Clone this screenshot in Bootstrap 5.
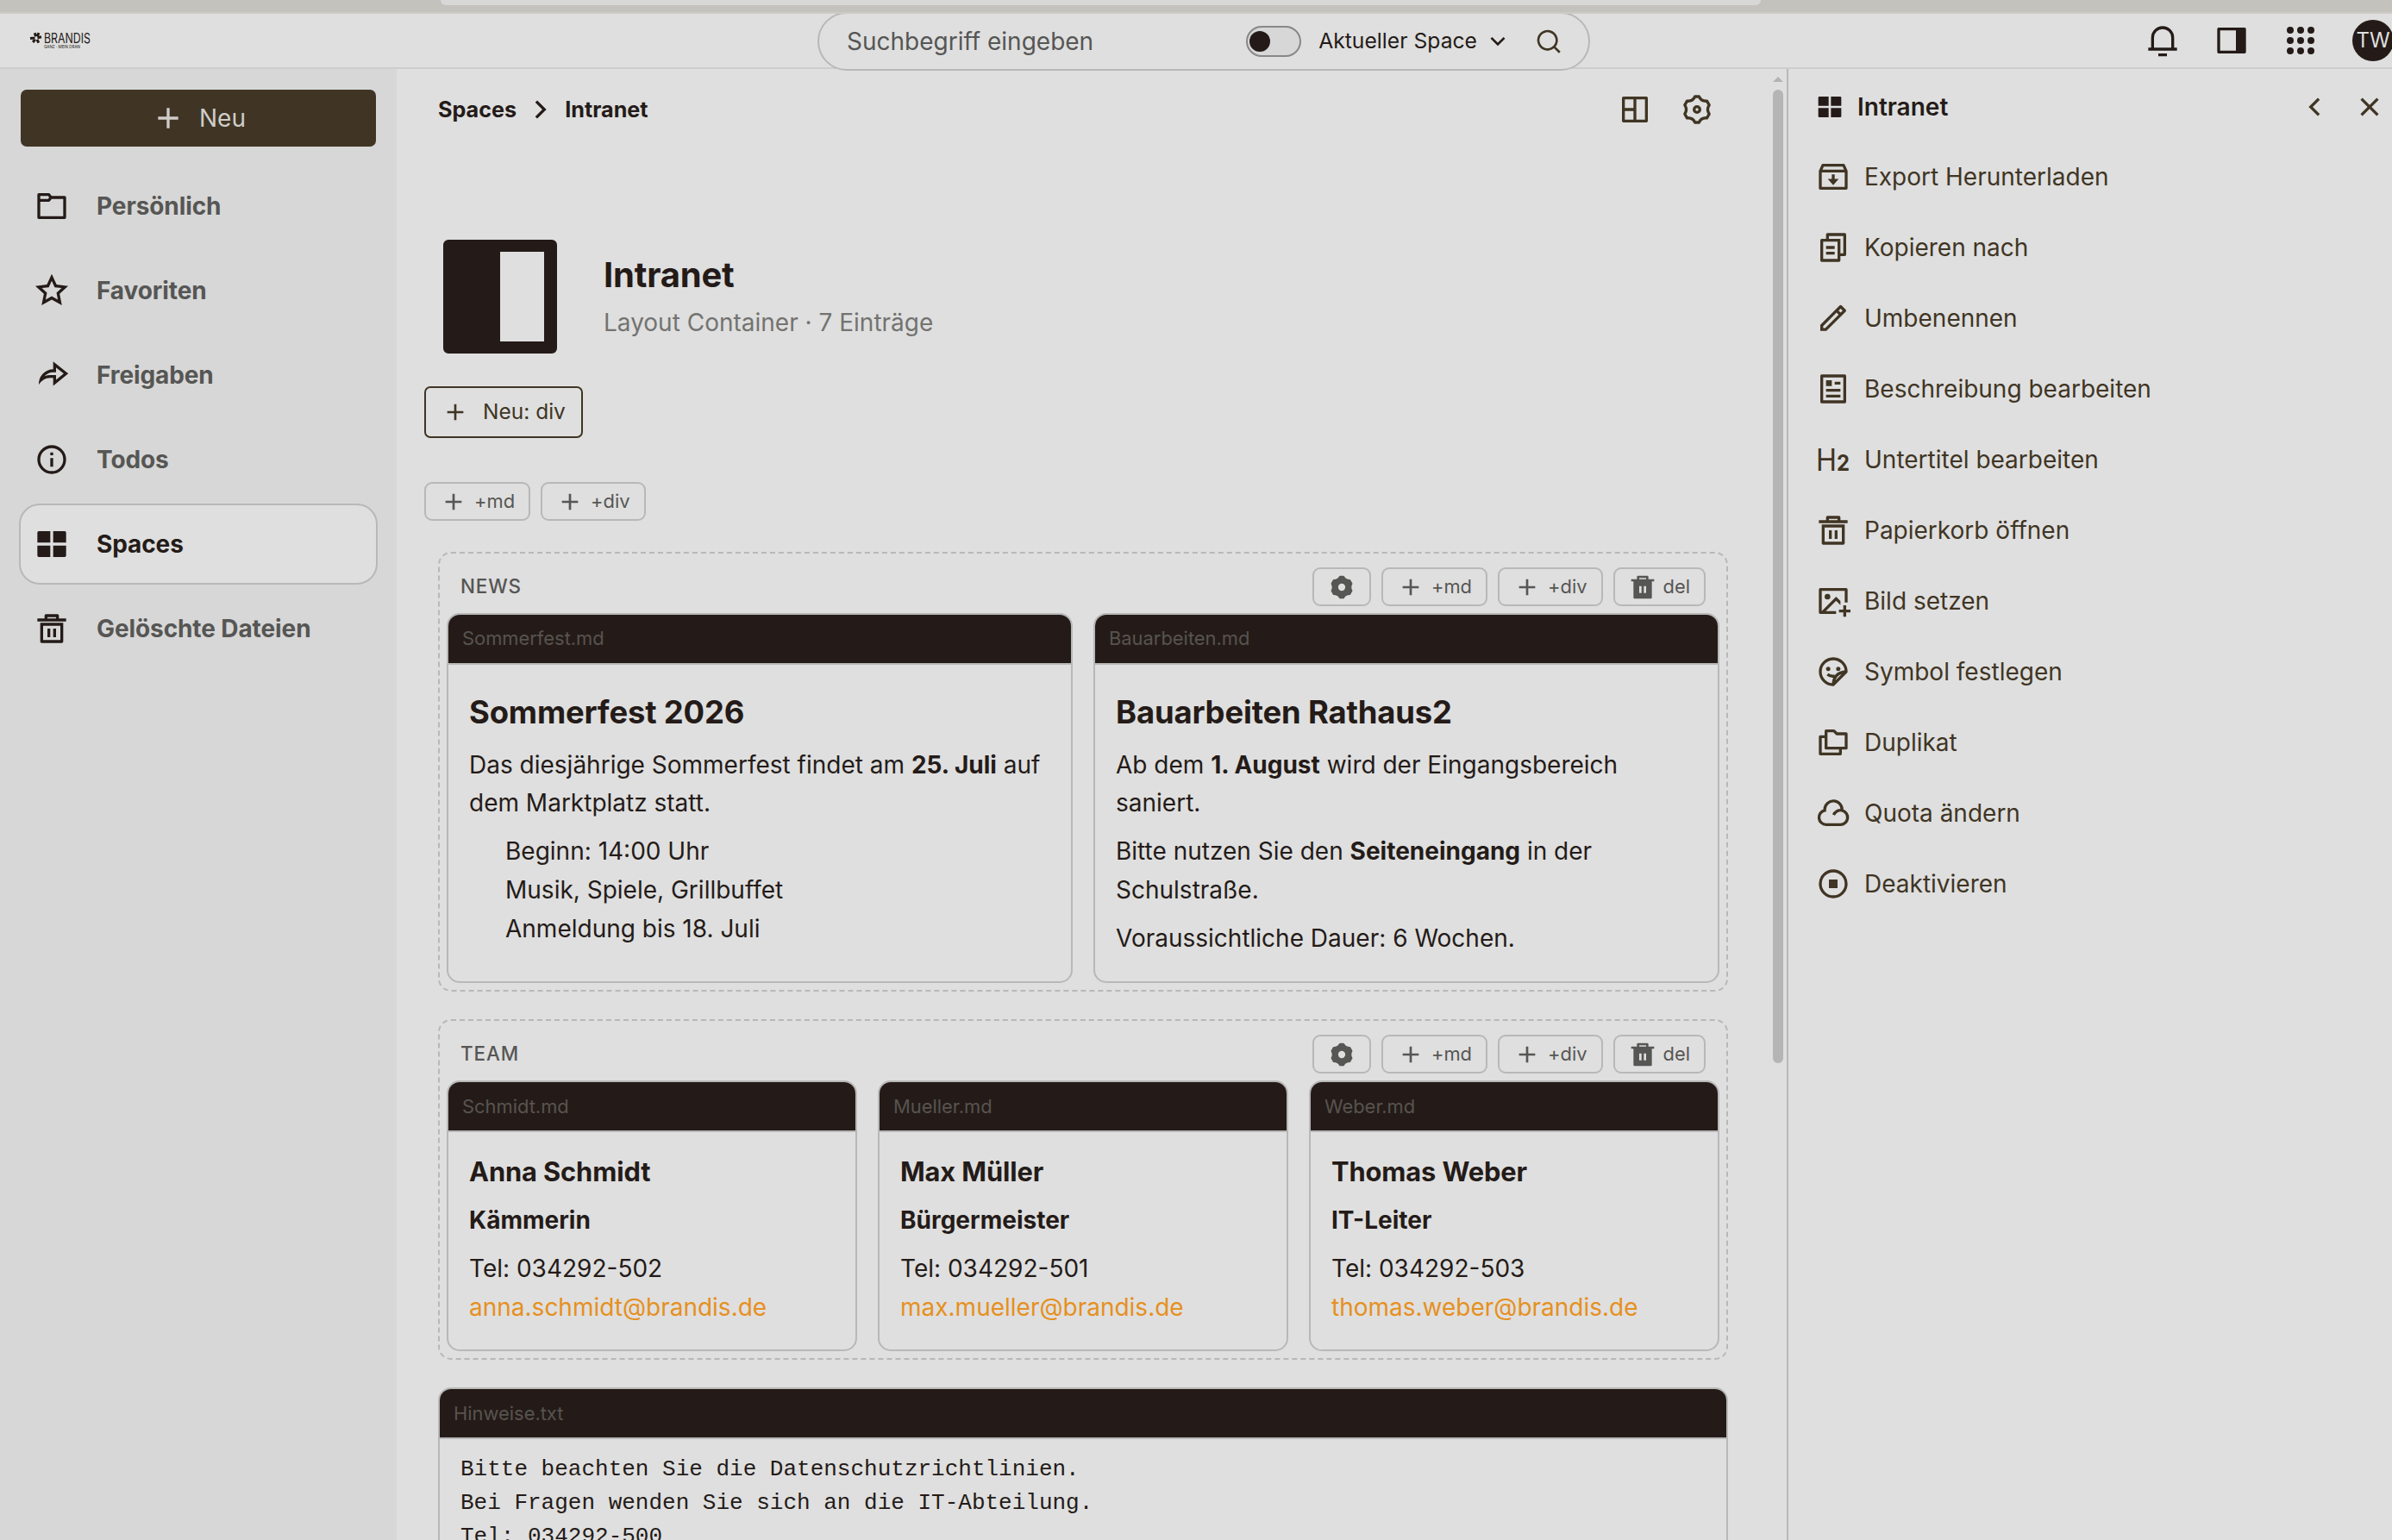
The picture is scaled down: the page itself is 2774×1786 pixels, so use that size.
<!DOCTYPE html>
<html lang="de">
<head>
<meta charset="utf-8">
<title>Intranet – Spaces</title>
<link href="https://cdn.jsdelivr.net/npm/bootstrap@5.3.0/dist/css/bootstrap.min.css" rel="stylesheet">
<script src="https://cdn.jsdelivr.net/npm/bootstrap@5.3.0/dist/js/bootstrap.bundle.min.js"></script>
<style>
:root{--ink:#241b18;--brown:#403524;--muted:#565654;--line:#b8b8b8;--surface:#dfdfdf;--side:#d7d7d7}
html,body{height:100%;overflow:hidden}
body{font-family:Inter,"Noto Sans",sans-serif;font-size:28px;line-height:1.6;color:var(--ink);background:var(--surface)}
svg{fill:currentColor;flex:none;display:block}
.i40{width:40px;height:40px}.i32{width:32px;height:32px}
.ln{fill:none;stroke:currentColor;stroke-width:2}
.chrome-strip{height:16px;background:#c4c2bd;border-bottom:2px solid #cecbc6;padding:0 732px 0 511px}
.address-end{height:6px;background:#d8d8d7;border-radius:0 0 10px 10px}
.topbar{height:64px;border-bottom:2px solid #cdcdcd;padding-left:35px}
.logo-box{width:913px}
.search-pill{width:896px;height:68px;border:2px solid var(--line);border-radius:34px;background:var(--surface);margin:-2px 0 -4px;clip-path:inset(2px 0 0 0);z-index:2;padding:0 30px 0 32px}
.search-hint{color:var(--muted)}
.toggle{width:64px;height:36px;border:2px solid #888;border-radius:18px;background:var(--side);padding:4px 2px}
.knob{width:24px;height:24px;border-radius:50%;background:var(--ink)}
.scope{font-size:24.7px}
.scope-find{margin-left:27px;color:var(--brown)}
.top-icons{margin-right:-2px}
.avatar-tw{width:48px;height:48px;border-radius:50%;background:var(--ink);color:var(--surface);font-size:24px;margin-left:8px}
.shell{height:1706px}
.sidebar{width:460px;background:var(--side);padding:24px 22px}
.btn-new{background:var(--brown);color:#cfcdca;height:66px;border-radius:7px;margin:0 2px 22px}
.side-link{height:94px;margin-bottom:4px;padding-left:16px;border:2px solid transparent;border-radius:24px;color:var(--muted);font-weight:700}
.side-link svg{color:var(--ink)}
.side-link span{margin-left:32px;letter-spacing:-.1px}
.side-link.current{background:var(--surface);border-color:var(--line);color:var(--ink)}
.main-pane{width:1614px;border-right:2px solid var(--line)}
.main-scroll{width:1596px;height:1706px;overflow:hidden;padding:0 52px 0 32px}
.crumbs{height:60px;margin-top:17px;font-size:25.2px;font-weight:700;padding:0 16px}
.tools{gap:32px;color:var(--brown)}
.hero{margin-top:109px;height:156px;padding-left:10px}
.hero-icon{width:156px;height:156px}
.hero-text{margin-left:42px;padding-top:3px}
.hero-title{font-size:40px;font-weight:700;line-height:48px;margin:0;letter-spacing:-.2px}
.hero-sub{color:#737370;line-height:44px;margin-top:9px}
.btn-div{height:60px;width:184px;border:2px solid var(--brown);border-radius:7px;color:var(--brown);font-size:24.5px;margin-top:26px;gap:16px;padding-left:18px}
.chip{height:45px;border:2px solid var(--line);border-radius:9px;color:var(--muted);font-size:21.9px;gap:8px;padding:0 16px}
.chip-row{gap:12px;margin-top:51px}
.stack{padding:36px 0 0 16px}
.zone{width:1496px;border:2px dashed var(--line);border-radius:15px;padding:8px;margin-bottom:32px}
.zone-head{height:61px;padding:8px 16px}
.zone-name{font-size:22.4px;color:var(--muted);font-weight:500;letter-spacing:.9px;line-height:44px}
.tile{border:2px solid var(--line);border-radius:15px;overflow:hidden;flex:1 1 0;min-width:0}
.tile-head{height:58px;background:var(--ink);border-bottom:2px solid var(--line);color:#57534f;font-size:21.9px;padding:0 16px}
.tile-body{padding:0 24px 16px}
.tile-body p,.tile-body ul{margin:0 0 11.2px}
.tile-body ul{list-style:none;padding:0 0 11.2px 42px}
.tile-body h2{font-size:36.4px;font-weight:700;line-height:47px;margin:31.6px 0 15px;letter-spacing:-.15px}
.tile-body h3{font-size:30.8px;font-weight:700;line-height:40px;margin:26.2px 0 13.4px;letter-spacing:-.1px}
.tile-body b{font-weight:700}
.tile-body a{color:#e69020;text-decoration:none}
.plain{font:26px/39px "Liberation Mono",monospace;padding:16px 24px;margin:0;color:var(--ink);overflow:hidden}
.rail{width:16px;padding:9px 4px 0 0}
.arrow-up{width:0;height:0;border:6px solid transparent;border-top:0;border-bottom:6px solid #b3b3b3}
.thumb{width:12px;height:1129px;margin-top:9px;border-radius:6px;background:#b5b5b5}
.panel{padding:18px 6px 0 32px;color:var(--brown)}
.panel-head{height:52px;color:var(--ink);font-weight:600}
.panel-head .ctl{color:var(--brown)}
.panel-close{margin-left:24px}
.actions{margin-top:14px}
.action{height:82px;gap:16px}
</style>
</head>
<body>
<svg width="0" height="0" class="position-absolute">
<symbol id="plus" viewBox="0 0 24 24"><path d="M11 11V5h2v6h6v2h-6v6h-2v-6H5v-2z"/></symbol>
<symbol id="grid4" viewBox="0 0 24 24"><path d="M11 13v8H3a1 1 0 0 1-1-1v-7zm11 0v7a1 1 0 0 1-1 1h-8v-8zM11 3v8H2V4a1 1 0 0 1 1-1zm10 0a1 1 0 0 1 1 1v7h-9V3z"/></symbol>
<symbol id="bin" viewBox="0 0 24 24"><path d="M4 8h16v13a1 1 0 0 1-1 1H5a1 1 0 0 1-1-1zm2 2v10h12V10zm3 2h2v6H9zm4 0h2v6h-2zM7 5V3a1 1 0 0 1 1-1h8a1 1 0 0 1 1 1v2h5v2H2V5zm2-1v1h6V4z"/></symbol>
<symbol id="binfill" viewBox="0 0 24 24"><path fill-rule="evenodd" d="M20 7v14a1 1 0 0 1-1 1H5a1 1 0 0 1-1-1V7H2V5h5V3a1 1 0 0 1 1-1h8a1 1 0 0 1 1 1v2h5v2zM9 4v1h6V4zm0 7v6h2v-6zm4 0v6h2v-6z"/></symbol>
<symbol id="gear" viewBox="0 0 24 24"><g class="ln" stroke-linejoin="round"><path d="M10.6 3H13.4Q14.9 6.4 18.9 6.1L20.5 8.9Q18.4 12 20.5 15.1L18.9 17.9Q14.9 17.6 13.4 21H10.6Q9.1 17.6 5.1 17.9L3.5 15.1Q5.6 12 3.5 8.9L5.1 6.1Q9.1 6.4 10.6 3z"/><circle cx="12" cy="12" r="2"/></g></symbol>
<symbol id="gearfill" viewBox="0 0 24 24"><path stroke="currentColor" stroke-width="1.6" stroke-linejoin="round" d="M10.6 2.8H13.4Q15 6 18.9 6L20.5 8.9Q18.8 12 20.5 15.1L18.9 18Q15 18 13.4 21.2H10.6Q9 18 5.1 18L3.5 15.1Q5.2 12 3.5 8.9L5.1 6Q9 6 10.6 2.8z"/><circle cx="12" cy="12" r="3.1" fill="#dfdfdf"/></symbol>
<symbol id="right" viewBox="0 0 24 24"><path d="M13.17 12 8.22 7.05l1.42-1.41L16 12l-6.36 6.36-1.42-1.41z"/></symbol>
</svg>

<div class="chrome-strip"><div class="address-end"></div></div>

<header class="topbar d-flex align-items-center">
  <div class="logo-box">
    <svg width="72" height="24" viewBox="0 0 72 24" overflow="visible" color="#241b18">
      <g stroke="currentColor" stroke-width="3"><path d="M5.3 3.2l1.2 4M10 3.2l-1.9 4.2M0 9.5l5.5-.4M13 7.8l-4.5 1M3.2 14l2.5-3.4M9.8 14.6L8 10.8"/></g>
      <text x="16" y="15" font-family="Inter" font-size="16.5" textLength="54" lengthAdjust="spacingAndGlyphs">BRANDIS</text>
      <text x="16" y="20.5" font-family="Inter" font-size="4.8" textLength="42" lengthAdjust="spacingAndGlyphs">GANZ · MEIN DRAN</text>
    </svg>
  </div>
  <div class="search-pill d-flex align-items-center position-relative">
    <span class="search-hint me-auto">Suchbegriff eingeben</span>
    <span class="toggle"><span class="knob d-block"></span></span>
    <span class="scope ms-3 ps-1">Aktueller Space</span>
    <svg class="i32 ms-2" viewBox="0 0 24 24"><path d="M12 13.17l4.95-4.95 1.41 1.42L12 16 5.64 9.64l1.41-1.42z"/></svg>
    <svg class="i32 scope-find" viewBox="0 0 24 24"><path d="M18.03 16.62l4.28 4.28-1.41 1.41-4.28-4.28A9 9 0 1 1 18.03 16.62zM16.02 15.87A7 7 0 1 0 15.87 16.02z"/></svg>
  </div>
  <div class="top-icons d-flex align-items-center ms-auto" style="gap:40px">
    <svg class="i40" viewBox="0 0 24 24"><path d="M20 17h2v2H2v-2h2v-7a8 8 0 1 1 16 0zm-2 0v-7a6 6 0 1 0-12 0v7zM9 21h6v2H9z"/></svg>
    <svg class="i40" viewBox="0 0 24 24"><path fill-rule="evenodd" d="M3 3h18a1 1 0 0 1 1 1v16a1 1 0 0 1-1 1H3a1 1 0 0 1-1-1V4a1 1 0 0 1 1-1zm1 2v14h11V5z"/></svg>
    <svg class="i40" style="margin-right:-8px" viewBox="0 0 24 24"><g><circle cx="4.8" cy="4.8" r="2.4"/><circle cx="12" cy="4.8" r="2.4"/><circle cx="19.2" cy="4.8" r="2.4"/><circle cx="4.8" cy="12" r="2.4"/><circle cx="12" cy="12" r="2.4"/><circle cx="19.2" cy="12" r="2.4"/><circle cx="4.8" cy="19.2" r="2.4"/><circle cx="12" cy="19.2" r="2.4"/><circle cx="19.2" cy="19.2" r="2.4"/></g></svg>
    <div class="avatar-tw d-flex align-items-center justify-content-center">TW</div>
  </div>
</header>

<div class="shell d-flex">
  <nav class="sidebar flex-shrink-0">
    <div class="btn-new d-flex align-items-center justify-content-center gap-3"><svg class="i40"><use href="#plus"/></svg><span>Neu</span></div>
    <div class="side-link d-flex align-items-center"><svg class="i40" viewBox="0 0 24 24"><path class="ln" stroke-linejoin="round" d="M3 4h7l1.5 2H21v14H3zM3 8h7l1.5-2"/></svg><span>Persönlich</span></div>
    <div class="side-link d-flex align-items-center"><svg class="i40" viewBox="0 0 24 24"><path d="M12 18.26l-7.05 3.95 1.57-7.93L.59 8.79l8.02-.95L12 .5l3.39 7.34 8.02.95-5.93 5.49 1.57 7.93zm0-2.29l4.25 2.38-.95-4.78 3.57-3.3-4.83-.58L12 5.28 9.96 9.69l-4.83.58 3.57 3.3-.95 4.78z"/></svg><span>Favoriten</span></div>
    <div class="side-link d-flex align-items-center"><svg class="i40" viewBox="0 0 24 24"><path d="M13 14h-2c-3.46 0-6.46 1.95-7.97 4.81A10 10 0 0 1 13 8V2.5L23.5 11 13 19.5zm-2-2h4v3.31L20.32 11 15 6.69V10h-2c-2.42 0-4.59 1.07-6.06 2.77A11 11 0 0 1 11 12z"/></svg><span>Freigaben</span></div>
    <div class="side-link d-flex align-items-center"><svg class="i40" viewBox="0 0 24 24"><circle class="ln" cx="12" cy="12" r="9"/><path d="M11 7h2v2h-2zm0 4h2v6h-2z"/></svg><span>Todos</span></div>
    <div class="side-link current d-flex align-items-center"><svg class="i40"><use href="#grid4"/></svg><span>Spaces</span></div>
    <div class="side-link d-flex align-items-center"><svg class="i40"><use href="#bin"/></svg><span>Gelöschte Dateien</span></div>
  </nav>

  <main class="main-pane d-flex flex-shrink-0">
    <div class="main-scroll">
      <div class="crumbs d-flex align-items-center">
        <span>Spaces</span><svg class="i40 mx-2"><use href="#right"/></svg><span>Intranet</span>
        <div class="tools d-flex ms-auto">
          <svg class="i40" viewBox="0 0 24 24"><path fill-rule="evenodd" d="M4 3h16a1 1 0 0 1 1 1v16a1 1 0 0 1-1 1H4a1 1 0 0 1-1-1V4a1 1 0 0 1 1-1zm1 2v6h6V5zm0 8v6h6v-6zm8-8v14h6V5z"/></svg>
          <svg class="i40"><use href="#gear"/></svg>
        </div>
      </div>

      <div class="hero d-flex align-items-center">
        <svg class="hero-icon" viewBox="0 0 156 156"><path fill-rule="evenodd" d="M18 12h120a6 6 0 0 1 6 6v120a6 6 0 0 1-6 6H18a6 6 0 0 1-6-6V18a6 6 0 0 1 6-6zm60 14v104h51V26z"/></svg>
        <div class="hero-text">
          <h1 class="hero-title">Intranet</h1>
          <div class="hero-sub">Layout Container · 7 Einträge</div>
        </div>
      </div>

      <div class="btn-div d-flex align-items-center"><svg class="i32"><use href="#plus"/></svg>Neu: div</div>
      <div class="chip-row d-flex">
        <div class="chip d-flex align-items-center"><svg class="i32"><use href="#plus"/></svg>+md</div>
        <div class="chip d-flex align-items-center"><svg class="i32"><use href="#plus"/></svg>+div</div>
      </div>

      <div class="stack">
        <section class="zone">
          <div class="zone-head d-flex justify-content-between">
            <span class="zone-name">NEWS</span>
            <div class="d-flex" style="gap:12px">
              <div class="chip d-flex align-items-center"><svg class="i32"><use href="#gearfill"/></svg></div>
              <div class="chip d-flex align-items-center"><svg class="i32"><use href="#plus"/></svg>+md</div>
              <div class="chip d-flex align-items-center"><svg class="i32"><use href="#plus"/></svg>+div</div>
              <div class="chip d-flex align-items-center"><svg class="i32"><use href="#binfill"/></svg>del</div>
            </div>
          </div>
          <div class="d-flex gap-4">
            <article class="tile">
              <div class="tile-head d-flex align-items-center">Sommerfest.md</div>
              <div class="tile-body">
                <h2>Sommerfest 2026</h2>
                <p>Das diesjährige Sommerfest findet am <b>25. Juli</b> auf dem Marktplatz statt.</p>
                <ul><li>Beginn: 14:00 Uhr</li><li>Musik, Spiele, Grillbuffet</li><li>Anmeldung bis 18. Juli</li></ul>
              </div>
            </article>
            <article class="tile">
              <div class="tile-head d-flex align-items-center">Bauarbeiten.md</div>
              <div class="tile-body">
                <h2>Bauarbeiten Rathaus2</h2>
                <p>Ab dem <b>1. August</b> wird der Eingangsbereich saniert.</p>
                <p>Bitte nutzen Sie den <b>Seiteneingang</b> in der Schulstraße.</p>
                <p>Voraussichtliche Dauer: 6 Wochen.</p>
              </div>
            </article>
          </div>
        </section>

        <section class="zone">
          <div class="zone-head d-flex justify-content-between">
            <span class="zone-name">TEAM</span>
            <div class="d-flex" style="gap:12px">
              <div class="chip d-flex align-items-center"><svg class="i32"><use href="#gearfill"/></svg></div>
              <div class="chip d-flex align-items-center"><svg class="i32"><use href="#plus"/></svg>+md</div>
              <div class="chip d-flex align-items-center"><svg class="i32"><use href="#plus"/></svg>+div</div>
              <div class="chip d-flex align-items-center"><svg class="i32"><use href="#binfill"/></svg>del</div>
            </div>
          </div>
          <div class="d-flex gap-4">
            <article class="tile">
              <div class="tile-head d-flex align-items-center">Schmidt.md</div>
              <div class="tile-body"><h3>Anna Schmidt</h3><p><b>Kämmerin</b></p><p>Tel: 034292-502<br><a href="#">anna.schmidt@brandis.de</a></p></div>
            </article>
            <article class="tile">
              <div class="tile-head d-flex align-items-center">Mueller.md</div>
              <div class="tile-body"><h3>Max Müller</h3><p><b>Bürgermeister</b></p><p>Tel: 034292-501<br><a href="#">max.mueller@brandis.de</a></p></div>
            </article>
            <article class="tile">
              <div class="tile-head d-flex align-items-center">Weber.md</div>
              <div class="tile-body"><h3>Thomas Weber</h3><p><b>IT-Leiter</b></p><p>Tel: 034292-503<br><a href="#">thomas.weber@brandis.de</a></p></div>
            </article>
          </div>
        </section>

        <article class="tile" style="width:1496px">
          <div class="tile-head d-flex align-items-center">Hinweise.txt</div>
          <pre class="plain">Bitte beachten Sie die Datenschutzrichtlinien.
Bei Fragen wenden Sie sich an die IT-Abteilung.
Tel: 034292-500</pre>
        </article>
      </div>
    </div>
    <div class="rail"><div class="arrow-up"></div><div class="thumb"></div></div>
  </main>

  <aside class="panel flex-grow-1">
    <div class="panel-head d-flex align-items-center">
      <svg class="i32"><use href="#grid4"/></svg><span class="ms-3">Intranet</span>
      <svg class="i40 ms-auto ctl" viewBox="0 0 24 24"><path d="M10.83 12l4.95 4.95-1.42 1.41L8 12l6.36-6.36 1.42 1.41z"/></svg>
      <svg class="i40 ctl panel-close" viewBox="0 0 24 24"><path d="M12 10.59l4.95-4.95 1.41 1.41L13.41 12l4.95 4.95-1.41 1.41L12 13.41l-4.95 4.95-1.41-1.41L10.59 12 5.64 7.05l1.41-1.41z"/></svg>
    </div>
    <div class="actions">
      <div class="action d-flex align-items-center"><svg class="i40" viewBox="0 0 24 24"><path class="ln" stroke-linejoin="round" d="M3 8l1.8-4h14.4L21 8v12H3zM3 8h18"/><path d="M13 10.3v3.2h2.8L12 17.9l-3.8-4.4H11v-3.2z"/></svg>Export Herunterladen</div>
      <div class="action d-flex align-items-center"><svg class="i40" viewBox="0 0 24 24"><path d="M7 6V3a1 1 0 0 1 1-1h12a1 1 0 0 1 1 1v14a1 1 0 0 1-1 1h-3v3a1 1 0 0 1-1 1H4a1 1 0 0 1-1-1V7a1 1 0 0 1 1-1zM5 8v12h10V8zm4-2h8v10h2V4H9zm-2 5h6v2H7zm0 4h6v2H7z"/></svg>Kopieren nach</div>
      <div class="action d-flex align-items-center"><svg class="i40" viewBox="0 0 24 24"><path d="M15.73 9.58l-1.42-1.42L5 17.48v1.41h1.41zm1.41-1.42l1.42-1.41-1.42-1.42-1.41 1.42zM7.24 20.89H3v-4.24L16.44 3.21a1 1 0 0 1 1.41 0l2.83 2.83a1 1 0 0 1 0 1.41z"/></svg>Umbenennen</div>
      <div class="action d-flex align-items-center"><svg class="i40" viewBox="0 0 24 24"><rect class="ln" x="4" y="3" width="16" height="18" stroke-linejoin="round"/><path d="M7 6h4v4H7zm6 1h4v2h-4zm-6 5h10v2H7zm0 4h10v2H7z"/></svg>Beschreibung bearbeiten</div>
      <div class="action d-flex align-items-center"><svg class="i40" viewBox="0 0 40 40"><text x="0" y="33" font-family="Inter" font-size="35" font-weight="400" textLength="24" lengthAdjust="spacingAndGlyphs">H</text><text x="24" y="33" font-family="Inter" font-size="26" font-weight="700" textLength="15" lengthAdjust="spacingAndGlyphs">2</text></svg>Untertitel bearbeiten</div>
      <div class="action d-flex align-items-center"><svg class="i40"><use href="#bin"/></svg>Papierkorb öffnen</div>
      <div class="action d-flex align-items-center"><svg class="i40" viewBox="0 0 24 24" overflow="visible"><path d="M21 15v3h3v2h-3v3h-2v-3h-3v-2h3v-3zm0-12a1 1 0 0 1 1 1v9h-2V5H4v14L14 9l3 3v2.83l-3-3L6.83 19H14v2H3a1 1 0 0 1-1-1V4a1 1 0 0 1 1-1zM8 7a2 2 0 1 1 0 4 2 2 0 0 1 0-4z"/></svg>Bild setzen</div>
      <div class="action d-flex align-items-center"><svg class="i40" viewBox="0 0 24 24"><path class="ln" stroke-linejoin="round" d="M12 21A9 9 0 1 1 21 12L12 21Q12.3 12.6 21 12M8 13.8Q10 15.6 13 15"/><circle cx="8.5" cy="10" r="1.5"/><circle cx="15.5" cy="10" r="1.5"/></svg>Symbol festlegen</div>
      <div class="action d-flex align-items-center"><svg class="i40" viewBox="0 0 24 24"><path class="ln" stroke-linejoin="round" d="M7 4h5.5l2 2H21v10H7zM7 8H3v12h14v-4"/></svg>Duplikat</div>
      <div class="action d-flex align-items-center"><svg class="i40" viewBox="0 0 24 24"><path class="ln" d="M12.3 13.3A5 5 0 1 1 17 20H7A5 5 0 0 1 6.1 10.1V9a6 6 0 0 1 12 1.1"/></svg>Quota ändern</div>
      <div class="action d-flex align-items-center"><svg class="i40" viewBox="0 0 24 24"><circle class="ln" cx="12" cy="12" r="9"/><path d="M9 9h6v6H9z"/></svg>Deaktivieren</div>
    </div>
  </aside>
</div>
</body>
</html>
